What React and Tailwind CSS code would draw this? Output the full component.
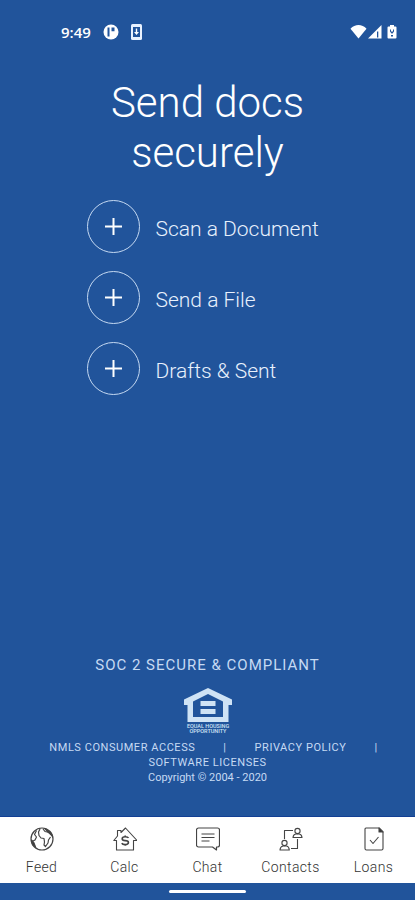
const actions = ["Scan a Document", "Send a File", "Drafts & Sent"];

function FeedIcon() {
  return (
    <svg className="size-6" viewBox="0 0 24 24" fill="none" stroke="#444" strokeWidth="1.2" strokeLinejoin="round" aria-hidden="true">
      <circle cx="12" cy="12" r="11" />
      <path d="M10 2 8.500 5 9 8.500 11 11 14 11.500 14.500 15 14 18 15.500 19.500 18 16 18.500 13 20.500 10" />
      <path d="M2 14.500 5 13 6.500 10 4.500 7.500 6.500 3.500M13 2 15 4.500 19.500 5.500 22.500 9.500" />
      <path fill="#333" d="M1.500 13 4 16 5.500 20 2.500 17.500ZM15 1.800 20 5 22.500 9 18.500 5.500Z" />
    </svg>
  );
}

function CalcIcon() {
  return (
    <svg className="size-6" viewBox="0 0 24 24" fill="none" stroke="#444" strokeWidth="1.1" strokeLinejoin="round" aria-hidden="true">
      <path d="M3.500 13.500H.8L4.500 9V3.500h3.500V5.500L12.500 1 24 13.500H20.500V23H3.500Z" />
      <path strokeWidth="1.6" d="M15.500 11c-.5-1-1.500-1.300-3.300-1.300-4 0-4 3.900 0 3.900 4.300 0 4.300 4 0 4-2 0-3-.5-3.400-1.500M12.200 8.500v1.200M12.200 17.600v1.200" />
    </svg>
  );
}

function ChatIcon() {
  return (
    <svg className="size-6" viewBox="0 0 24 24" fill="none" stroke="#444" strokeWidth="1.2" strokeLinejoin="round" aria-hidden="true">
      <path d="M2.500 1h19a2 2 0 0 1 2 2v15a2 2 0 0 1-2 2H20.500v3l-4-3h-14a2 2 0 0 1-2-2V3a2 2 0 0 1 2-2Z" />
      <path d="M5.500 7h13M5.500 10.500h13M5.500 14h8" />
    </svg>
  );
}

function ContactsIcon() {
  return (
    <svg className="size-6" viewBox="0 0 24 24" fill="none" stroke="#444" strokeWidth="1.1" strokeLinejoin="round" aria-hidden="true">
      <circle cx="5.500" cy="16" r="2.600" />
      <path d="M1 23c.2-2.700 1.500-3.700 3-4h3.600c1.700.3 2.500 1.300 2.700 4Z" />
      <circle cx="18.500" cy="4" r="2.600" />
      <path d="M14 10.500c.2-2.500 1.200-3.200 2.700-3.500h3.600c1.500.3 2.500 1 2.700 3.500Z" />
      <path d="M5.500 12V3.500H14M18.500 12V21.500H12" />
    </svg>
  );
}

function LoansIcon() {
  return (
    <svg className="size-6" viewBox="0 0 24 24" fill="none" stroke="#444" strokeWidth="1.1" strokeLinejoin="round" aria-hidden="true">
      <path d="M4 1h13l4 4v16.500a1.500 1.500 0 0 1-1.500 1.500H4.500a1.500 1.500 0 0 1-1.500-1.500V2a1 1 0 0 1 1-1Z" />
      <path fill="#333" d="M17 1v4h4Z" />
      <path d="m8 13 3 3.500 5.500-6.500" />
    </svg>
  );
}

const tabs = [
  { label: "Feed", Icon: FeedIcon },
  { label: "Calc", Icon: CalcIcon },
  { label: "Chat", Icon: ChatIcon },
  { label: "Contacts", Icon: ContactsIcon },
  { label: "Loans", Icon: LoansIcon },
];

function StatusBar() {
  return (
    <header className="flex h-16 items-center justify-between pr-[18px] pl-[61px]">
      <div className="flex items-center gap-3">
        <span className="font-['Open_Sans',sans-serif] text-[15px] font-semibold">9:49</span>
        <svg className="size-4" viewBox="0 0 16 16" aria-hidden="true">
          <circle cx="8" cy="8" r="7.500" fill="#fff" />
          <path d="M4.500 3.500h2v9h-2zM8.500 3.500h3v3.700h-3z" fill="#21549b" />
        </svg>
        <svg className="h-4 w-[11px]" viewBox="0 0 11 16" aria-hidden="true">
          <rect width="11" height="16" rx="1.500" fill="#e9f2ff" />
          <path d="M2 3h7v10H2z" fill="#21549b" />
          <path d="M4.800 4.500h1.400V8H8l-2.500 3L3 8h1.800z" fill="#fff" />
        </svg>
      </div>
      <div className="flex items-center">
        <svg className="h-4 w-[17px]" viewBox="0 0 17 16" fill="#fff" aria-hidden="true">
          <path d="M.5 4.800C5-.2 12-.2 16.500 4.800L8.500 14.500Z" />
        </svg>
        <svg className="size-4" viewBox="0 0 16 16" aria-hidden="true">
          <path d="M1 14.500 14.500 1v13.500Z" fill="#fff" />
          <path d="M10 7.500h1.300v6H10z" fill="#21549b" />
        </svg>
        <svg className="ml-1 h-4 w-[10px]" viewBox="0 0 10 16" aria-hidden="true">
          <path d="M3 1h4v1.500h1.500a1 1 0 0 1 1 1v10a1 1 0 0 1-1 1h-7a1 1 0 0 1-1-1v-10a1 1 0 0 1 1-1H3Z" fill="#fff" />
          <path d="M4 11h2v1.500H4zM3 5.500h1v2h2v-2h1v2L5.500 9.500h-1L3 7.500z" fill="#21549b" />
        </svg>
      </div>
    </header>
  );
}

function HousingLogo() {
  return (
    <svg className="mt-3 h-[49px] w-12" viewBox="0 0 48 49" fill="#cfe3f5" role="img" aria-label="Equal Housing Opportunity">
      <path fillRule="evenodd" d="M24 1 48 12.500V18H44.500V35H3.500V18H0V12.500ZM24 7 9 14.500V30H39V14.500Z" />
      <path d="M16.500 14h15v5h-15zM16.500 22h15v5h-15z" />
      <g fontFamily="Roboto, sans-serif" fontSize="5.500" fontWeight="500" textAnchor="middle">
        <text x="24" y="41">EQUAL HOUSING</text>
        <text x="24" y="46">OPPORTUNITY</text>
      </g>
    </svg>
  );
}

export default function App() {
  return (
    <div className="flex min-h-screen flex-col bg-[#21549b] font-['Roboto',sans-serif] text-white">
      <StatusBar />
      <main className="flex flex-1 flex-col items-center">
        <h1 className="mt-[14px] w-64 text-center text-[42px] leading-[50px] font-light">Send docs securely</h1>
        <div className="mt-[22px] flex w-[242px] flex-col gap-[18px]">
          {actions.map((label) => (
            <button key={label} type="button" className="flex items-center gap-4 text-left text-[21px] leading-6 font-light whitespace-nowrap text-[#e8f1fd]">
              <span className="flex size-[53px] shrink-0 items-center justify-center rounded-full border border-[#c5d9f2]">
                <svg className="size-[19px]" viewBox="0 0 19 19" stroke="#fff" strokeWidth="2" aria-hidden="true">
                  <path d="M1 9.500h17M9.500 1v17" />
                </svg>
              </span>
              <span className="pt-1">{label}</span>
            </button>
          ))}
        </div>
        <footer className="mt-auto flex w-full flex-col items-center pb-[31px] text-[#c6daf3]">
          <p className="text-[15px] leading-5 tracking-[1px]">SOC 2 SECURE &amp; COMPLIANT</p>
          <HousingLogo />
          <nav className="mt-1 flex w-full flex-col items-center text-[11px] leading-[15px] tracking-wider">
            <div className="flex gap-7 pl-3">
              <a href="#nmls">NMLS CONSUMER ACCESS</a>
              <span>|</span>
              <a href="#privacy">PRIVACY POLICY</a>
              <span>|</span>
            </div>
            <a href="#licenses">SOFTWARE LICENSES</a>
          </nav>
          <p className="text-[11px] leading-[15px]">Copyright © 2004 - 2020</p>
        </footer>
      </main>
      <nav className="grid h-[67px] grid-cols-5 border-t border-[#123f94] bg-white text-[#333]">
        {tabs.map(({ label, Icon }) => (
          <button key={label} type="button" className="flex flex-col items-center pt-[10px] text-[14px] leading-5 font-light tracking-wide">
            <Icon />
            <span className="mt-[6px]">{label}</span>
          </button>
        ))}
      </nav>
      <div className="flex h-[17px] items-center justify-center">
        <div className="h-[3px] w-[77px] rounded-full bg-white" />
      </div>
    </div>
  );
}
